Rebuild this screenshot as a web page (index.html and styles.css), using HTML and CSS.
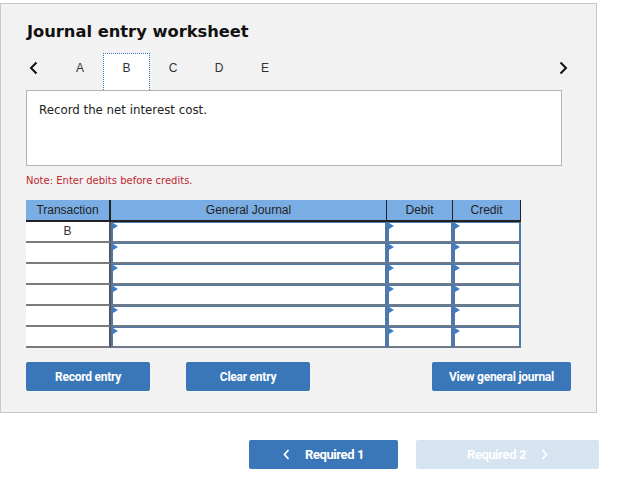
FILE: index.html
```html
<!DOCTYPE html>
<html>
<head>
<meta charset="utf-8">
<link rel="stylesheet" href="styles.css">
</head>
<body>
<div class="panel">
  <h1 class="title">Journal entry worksheet</h1>
  <div class="tabs">
    <span class="chev chev-left"><svg width="9" height="14" viewBox="0 0 9 14"><path d="M7.5 1.5 L2 7 L7.5 12.5" fill="none" stroke="#111" stroke-width="2"/></svg></span>
    <span class="tab">A</span>
    <span class="tab active">B</span>
    <span class="tab">C</span>
    <span class="tab">D</span>
    <span class="tab">E</span>
    <span class="spacer"></span>
    <span class="chev chev-right"><svg width="9" height="14" viewBox="0 0 9 14"><path d="M1.5 1.5 L7 7 L1.5 12.5" fill="none" stroke="#111" stroke-width="2"/></svg></span>
  </div>
  <div class="prompt">Record the net interest cost.</div>
  <div class="note">Note: Enter debits before credits.</div>
  <div class="grid">
    <div class="hd">Transaction</div>
    <div class="hd">General Journal</div>
    <div class="hd">Debit</div>
    <div class="hd">Credit</div>

    <div class="tx">B</div><div class="in"></div><div class="in"></div><div class="in"></div>
    <div class="tx"></div><div class="in"></div><div class="in"></div><div class="in"></div>
    <div class="tx"></div><div class="in"></div><div class="in"></div><div class="in"></div>
    <div class="tx"></div><div class="in"></div><div class="in"></div><div class="in"></div>
    <div class="tx"></div><div class="in"></div><div class="in"></div><div class="in"></div>
    <div class="tx"></div><div class="in"></div><div class="in"></div><div class="in"></div>
  </div>
  <div class="actions">
    <button class="btn btn-record">Record entry</button>
    <button class="btn btn-clear">Clear entry</button>
    <span class="spacer"></span>
    <button class="btn btn-view">View general journal</button>
  </div>
</div>
<div class="nav">
  <button class="nbtn prev"><svg width="7" height="11" viewBox="0 0 7 11"><path d="M5.5 1 L1.5 5.5 L5.5 10" fill="none" stroke="#fff" stroke-width="1.8"/></svg><span>Required 1</span></button>
  <button class="nbtn next"><span>Required 2</span><svg width="7" height="11" viewBox="0 0 7 11"><path d="M1.5 1 L5.5 5.5 L1.5 10" fill="none" stroke="#fff" stroke-width="1.8"/></svg></button>
</div>
</body>
</html>
```
FILE: styles.css
```css
html, body {
  margin: 0;
  padding: 0;
  background: #fff;
}
body {
  font-family: "DejaVu Sans", Verdana, sans-serif;
  color: #222;
}
.panel {
  margin-top: 3px;
  width: 597px;
  height: 410px;
  box-sizing: border-box;
  border: 1px solid #c8c8c8;
  background: #f2f2f2;
  padding: 0 25px;
}
.title {
  margin: 17px 0 0 1px;
  font-size: 16.3px;
  line-height: 22px;
  font-weight: bold;
  color: #111;
  height: 22px;
}
.tabs {
  margin-top: 10px;
  display: flex;
  align-items: flex-start;
  height: 37px;
  width: 545px;
  font-family: "Liberation Sans", Arial, sans-serif;
  font-size: 12px;
  color: #333;
}
.chev {
  display: flex;
  align-items: center;
  padding-top: 8px;
}
.chev-left {
  width: 31px;
  padding-left: 3px;
  box-sizing: border-box;
}
.chev-right {
  padding-right: 3px;
}
.tab {
  width: 46px;
  height: 37px;
  padding-top: 8px;
  line-height: 14px;
  text-align: center;
  box-sizing: border-box;
}
.tab.active {
  background: #fff;
  border: 1px dotted #3b6fb8;
  border-bottom: none;
  width: 47px;
  padding-top: 7px;
}
.spacer {
  flex: 1;
}
.prompt {
  width: 536px;
  height: 76px;
  box-sizing: border-box;
  background: #fff;
  border: 1px solid #b4b4b4;
  padding: 12px 12px;
  font-size: 11.8px;
  color: #222;
}
.note {
  margin-top: 9px;
  height: 12px;
  font-size: 10px;
  line-height: 12px;
  color: #c1272d;
}
.grid {
  margin-top: 13px;
  display: grid;
  grid-template-columns: 85px 276px 66px 68px;
  grid-template-rows: 22px repeat(6, 21px);
  width: 495px;
  font-family: "Liberation Sans", Arial, sans-serif;
  font-size: 12px;
}
.hd {
  background: #7aade4;
  color: #222;
  text-align: center;
  line-height: 20px;
  border-bottom: 2px solid #222;
  border-right: 1px solid #222;
  box-sizing: border-box;
}
.hd:first-child {
  border-right-width: 2px;
}
.tx {
  background: #fff;
  text-align: center;
  line-height: 19px;
  border-bottom: 2px solid #7a7a7a;
  border-right: 2px solid #555;
  box-sizing: border-box;
  color: #333;
}
.in {
  position: relative;
  background: #fff;
  border: 2px solid #4f79ad;
  border-top-width: 1px;
  border-bottom: 2px solid #6e7a88;
  box-sizing: border-box;
}
.in::before {
  content: "";
  position: absolute;
  left: 0;
  top: 0;
  border-top: 3px solid transparent;
  border-bottom: 3px solid transparent;
  border-left: 5px solid #3d7cc9;
}
.actions {
  margin-top: 14px;
  display: flex;
  width: 545px;
}
.btn {
  height: 29px;
  border: none;
  border-radius: 2px;
  background: #3a77b9;
  color: #fff;
  font-family: Roboto, "Liberation Sans", Arial, sans-serif;
  font-weight: bold;
  font-size: 12px;
  letter-spacing: -0.25px;
  padding: 0;
  cursor: pointer;
}
.btn-record { width: 124px; }
.btn-clear { width: 124px; margin-left: 36px; }
.btn-view { width: 139px; }
.nav {
  margin-top: 27px;
  margin-left: 249px;
  display: flex;
  gap: 18px;
}
.nbtn {
  height: 29px;
  border: none;
  border-radius: 2px;
  color: #fff;
  font-family: Roboto, "Liberation Sans", Arial, sans-serif;
  font-weight: bold;
  font-size: 13px;
  letter-spacing: -0.4px;
  display: flex;
  align-items: center;
  justify-content: center;
  gap: 15px;
  padding: 0;
}
.prev { width: 149px; background: #3a77b9; }
.next { width: 183px; background: #d6e3f1; }
```
